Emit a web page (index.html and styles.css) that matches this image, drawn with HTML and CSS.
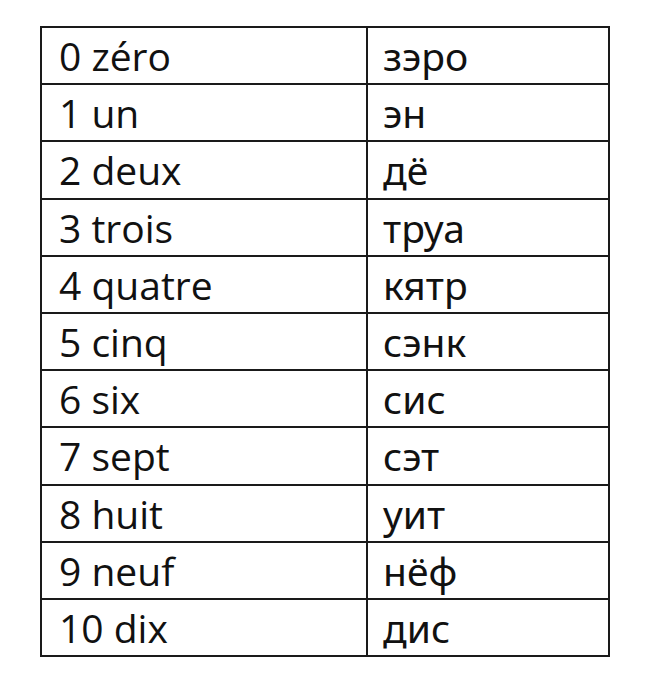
FILE: index.html
```html
<!DOCTYPE html>
<html>
<head>
<meta charset="utf-8">
<link rel="stylesheet" href="styles.css">
</head>
<body>
<table class="nums">
<tr><td class="fr">0 zéro</td><td class="ru">зэро</td></tr>
<tr><td class="fr">1 un</td><td class="ru">эн</td></tr>
<tr><td class="fr">2 deux</td><td class="ru">дё</td></tr>
<tr><td class="fr">3 trois</td><td class="ru">труа</td></tr>
<tr><td class="fr">4 quatre</td><td class="ru">кятр</td></tr>
<tr><td class="fr">5 cinq</td><td class="ru">сэнк</td></tr>
<tr><td class="fr">6 six</td><td class="ru">сис</td></tr>
<tr><td class="fr">7 sept</td><td class="ru">сэт</td></tr>
<tr><td class="fr">8 huit</td><td class="ru">уит</td></tr>
<tr><td class="fr">9 neuf</td><td class="ru">нёф</td></tr>
<tr><td class="fr">10 dix</td><td class="ru">дис</td></tr>
</table>
</body>
</html>
```
FILE: styles.css
```css
html, body {
  margin: 0;
  padding: 0;
  background: #ffffff;
}
body {
  padding: 26px 0 0 40px;
}
.nums {
  border-collapse: collapse;
  color: #111;
}
.nums td {
  border: 2px solid #1a1a1a;
  height: 57.2px;
  padding: 0 0 0 17px;
  vertical-align: middle;
  line-height: 1;
  box-sizing: border-box;
}
.fr {
  width: 326px;
  font-family: "Open Sans", "Lato", sans-serif;
  font-size: 39px;
}
.ru {
  width: 242px;
  padding-left: 15px !important;
  font-family: "Noto Sans", "DejaVu Sans", sans-serif;
  font-size: 39px;
}
```
